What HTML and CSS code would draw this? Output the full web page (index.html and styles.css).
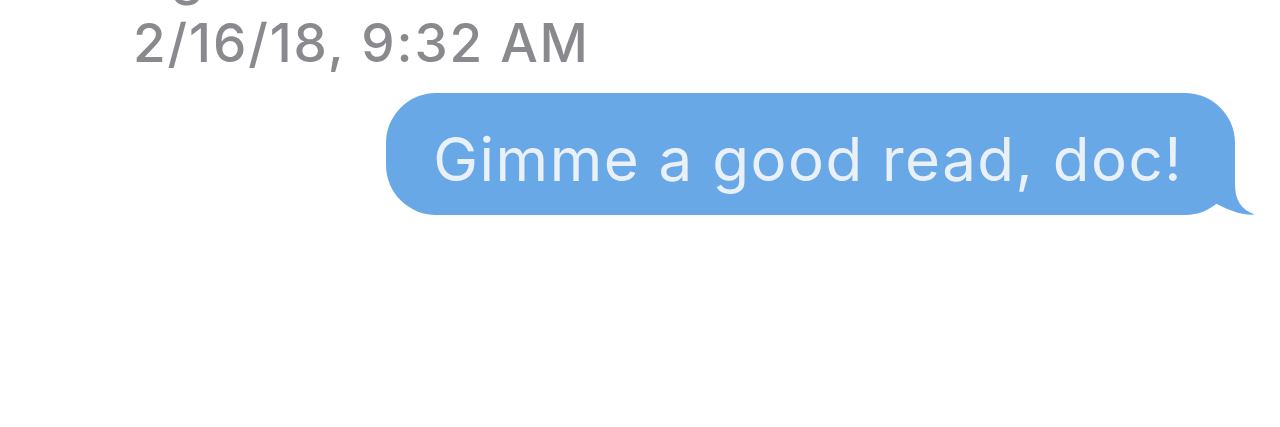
FILE: index.html
```html
<!DOCTYPE html>
<html lang="en">
<head>
<meta charset="utf-8">
<title>Messages</title>
<link rel="stylesheet" href="styles.css">
</head>
<body>
<div class="thread">
  <div class="meta">
    <div class="prev">ago</div>
    <div class="time">2/16/18, 9:32 AM</div>
  </div>
  <div class="row-out">
    <div class="bubble">
      <span class="bubble-text">Gimme a good read, doc!</span>
      <svg class="tail" width="60" height="65" viewBox="0 0 60 65" aria-hidden="true">
        <path d="M25 0 L35 0 L35 34 C35 50 41 60 55 64.5 C43 65.5 28 61 10 50 L0 58 L0 0 Z" fill="#68a8e7"/>
      </svg>
    </div>
  </div>
</div>
</body>
</html>
```

FILE: styles.css
```css
html, body {
  margin: 0;
  padding: 0;
  background: #ffffff;
}

body {
  width: 1280px;
  height: 427px;
  overflow: hidden;
  font-family: Inter, "Liberation Sans", Arial, sans-serif;
}

.thread {
  display: flex;
  flex-direction: column;
}

.meta {
  padding-left: 133px;
  color: #8a8a8e;
  font-size: 53px;
  line-height: 53px;
  font-weight: 500;
}

.prev {
  margin-top: -51px;
  height: 53px;
  padding-left: 8px;
}

.time {
  margin-top: 15px;
  letter-spacing: 1.9px;
}

.row-out {
  display: flex;
  justify-content: flex-end;
  padding-right: 45px;
  margin-top: 23px;
}

.bubble {
  position: relative;
  background: #68a8e7;
  border-radius: 50px;
  height: 122px;
  box-sizing: border-box;
  padding: 36px 52px 26px 47px;
  color: #eaf0f7;
  font-size: 60px;
  line-height: 60px;
  letter-spacing: 1.5px;
  white-space: nowrap;
}

.tail {
  position: absolute;
  right: -25px;
  bottom: 0;
  display: block;
}
```
